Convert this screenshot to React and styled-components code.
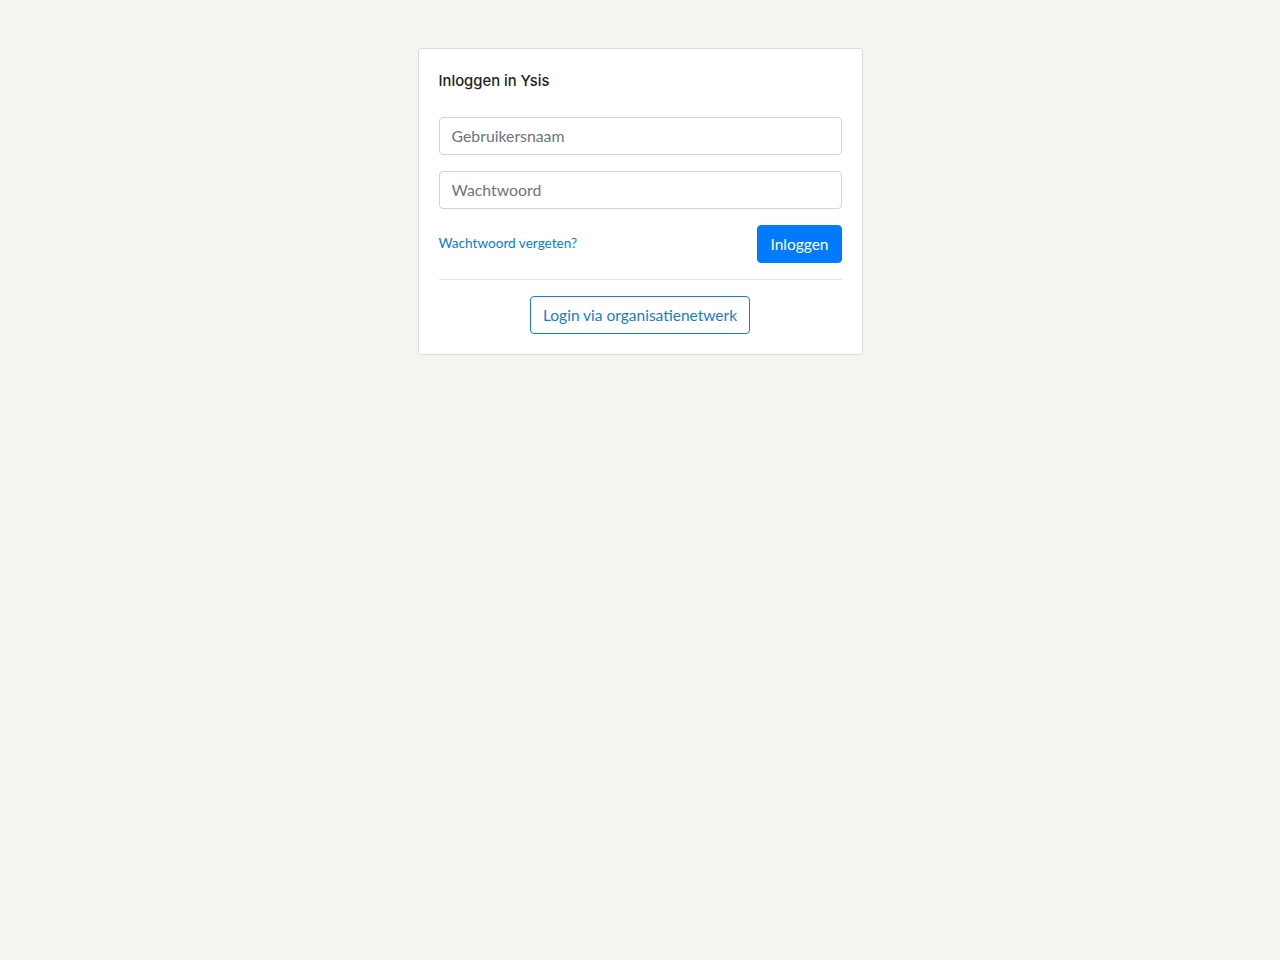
import React from "react";
import styled, { createGlobalStyle } from "styled-components";

const GlobalStyle = createGlobalStyle`
  body {
    margin: 0;
    background: #f4f4f0;
    font-family: Lato, "Open Sans", sans-serif;
  }
`;

const Page = styled.div`
  display: flex;
  justify-content: center;
  align-items: flex-start;
  padding-top: 48px;
  min-height: 912px;
`;

const Card = styled.div`
  width: 445px;
  box-sizing: border-box;
  background: #fff;
  border: 1px solid #dcdcdc;
  border-radius: 3px;
  padding: 18px 20px 20px;
  display: flex;
  flex-direction: column;
`;

const Title = styled.h1`
  margin: 2px 0 23px;
  font-family: Inter, "Noto Sans", sans-serif;
  font-size: 14.8px;
  line-height: 25px;
  font-weight: 500;
  color: #222;
`;

const Field = styled.input`
  height: 38px;
  box-sizing: border-box;
  border: 1px solid #ced4da;
  border-radius: 4px;
  padding: 0 12px 1px;
  font-family: Lato, sans-serif;
  font-size: 15.8px;
  color: #495057;
  margin-bottom: 16px;
  outline: none;

  &::placeholder {
    color: #6c757d;
  }
`;

const Row = styled.div`
  display: flex;
  justify-content: space-between;
  align-items: center;
  padding-bottom: 16px;
  border-bottom: 1px solid #e4e4e4;
  margin-bottom: 16px;
`;

const Link = styled.a`
  font-size: 13.6px;
  line-height: 18px;
  padding-bottom: 2px;
  color: #0a7bd6;
  text-decoration: none;
  cursor: pointer;
`;

const Button = styled.button`
  height: 38px;
  box-sizing: border-box;
  border-radius: 4px;
  padding: 0 12px;
  font-family: Lato, sans-serif;
  font-size: 15.5px;
  cursor: pointer;
  border: 1px solid ${(p) => (p.$outline ? "#1b7bc4" : "#007bff")};
  background: ${(p) => (p.$outline ? "#fff" : "#007bff")};
  color: ${(p) => (p.$outline ? "#1b7bc4" : "#fff")};
`;

const Center = styled.div`
  display: flex;
  justify-content: center;
`;

export default function App() {
  return (
    <>
      <GlobalStyle />
      <Page>
        <Card>
          <Title>Inloggen in Ysis</Title>
          <Field placeholder="Gebruikersnaam" />
          <Field type="password" placeholder="Wachtwoord" />
          <Row>
            <Link>Wachtwoord vergeten?</Link>
            <Button>Inloggen</Button>
          </Row>
          <Center>
            <Button $outline>Login via organisatienetwerk</Button>
          </Center>
        </Card>
      </Page>
    </>
  );
}
